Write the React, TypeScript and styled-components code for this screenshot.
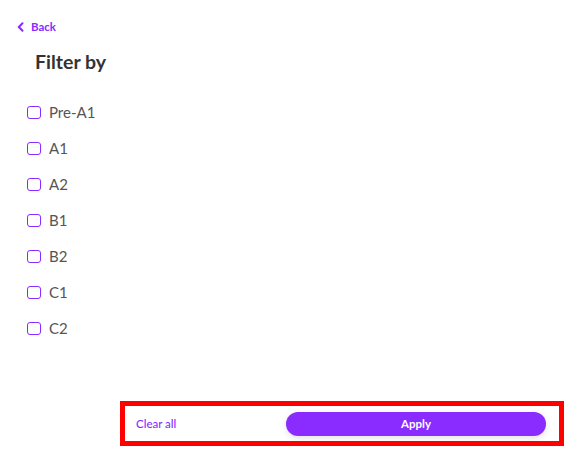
import React from 'react';
import styled, { createGlobalStyle } from 'styled-components';

const purple = '#8a2bff';

const GlobalStyle = createGlobalStyle`
  html, body {
    margin: 0;
    padding: 0;
    background: #ffffff;
  }
  body {
    font-family: Lato, 'Open Sans', sans-serif;
  }
`;

const Page = styled.div`
  width: 570px;
  height: 466px;
  display: flex;
  flex-direction: column;
  box-sizing: border-box;
  padding: 19px 6px 20px 0;
`;

const BackLink = styled.a`
  display: flex;
  align-items: center;
  gap: 7px;
  margin-left: 17px;
  font-size: 11.5px;
  font-weight: 700;
  line-height: 16px;
  color: ${purple};
  text-decoration: none;
  cursor: pointer;
`;

const Heading = styled.h2`
  margin: 15px 0 0 35px;
  font-size: 19.5px;
  font-weight: 700;
  line-height: 24px;
  color: #333333;
`;

const OptionList = styled.ul`
  list-style: none;
  margin: 28px 0 0 27px;
  padding: 0;
  display: flex;
  flex-direction: column;
  gap: 16px;
`;

const Option = styled.li`
  display: flex;
  align-items: center;
  gap: 8px;
  height: 20px;
`;

const Box = styled.span`
  width: 14px;
  height: 13px;
  box-sizing: border-box;
  border: 1.5px solid ${purple};
  border-radius: 3px;
`;

const Label = styled.span`
  font-size: 15px;
  color: #555555;
  line-height: 20px;
`;

const Footer = styled.div`
  margin-top: auto;
  margin-left: 120px;
  height: 45px;
  box-sizing: border-box;
  border: 5px solid #ff0000;
  display: flex;
  align-items: center;
  justify-content: space-between;
  padding: 0 13px 0 11px;
`;

const ClearButton = styled.button`
  border: none;
  background: none;
  padding: 0;
  font-family: inherit;
  font-size: 11.5px;
  font-weight: 500;
  color: ${purple};
  cursor: pointer;
`;

const ApplyButton = styled.button`
  width: 260px;
  height: 24px;
  border: none;
  border-radius: 12px;
  background: ${purple};
  box-shadow: 0 2px 6px rgba(0, 0, 0, 0.12);
  color: #ffffff;
  font-family: inherit;
  font-size: 11.5px;
  font-weight: 700;
  cursor: pointer;
`;

const levels = ['Pre-A1', 'A1', 'A2', 'B1', 'B2', 'C1', 'C2'];

const App = (): JSX.Element => (
  <>
    <GlobalStyle />
    <Page>
      <BackLink>
        <svg width="7" height="10" viewBox="0 0 7 10" fill="none">
          <path d="M5.5 1.2L1.8 5l3.7 3.8" stroke={purple} strokeWidth="2" strokeLinecap="round" strokeLinejoin="round" />
        </svg>
        Back
      </BackLink>
      <Heading>Filter by</Heading>
      <OptionList>
        {levels.map((level) => (
          <Option key={level}>
            <Box />
            <Label>{level}</Label>
          </Option>
        ))}
      </OptionList>
      <Footer>
        <ClearButton>Clear all</ClearButton>
        <ApplyButton>Apply</ApplyButton>
      </Footer>
    </Page>
  </>
);

export default App;
